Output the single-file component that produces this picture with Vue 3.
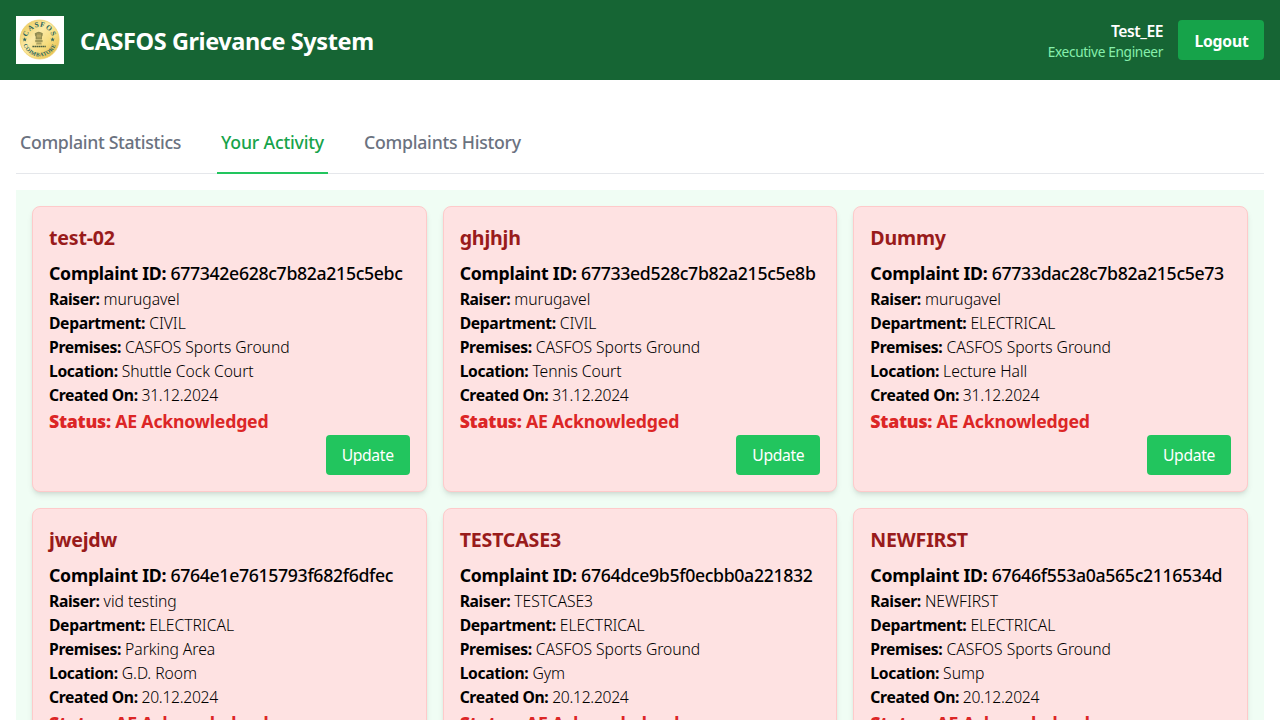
<script setup>
const tabs = ['Complaint Statistics', 'Your Activity', 'Complaints History']
const activeTab = 'Your Activity'

const complaint = (title, id, raiser, department, premises, location, created) => ({
  title,
  id,
  fields: [
    ['Raiser:', raiser],
    ['Department:', department],
    ['Premises:', premises],
    ['Location:', location],
  ],
  created,
  status: 'AE Acknowledged',
})

const complaints = [
  complaint('test-02', '677342e628c7b82a215c5ebc', 'murugavel', 'CIVIL', 'CASFOS Sports Ground', 'Shuttle Cock Court', '31.12.2024'),
  complaint('ghjhjh', '67733ed528c7b82a215c5e8b', 'murugavel', 'CIVIL', 'CASFOS Sports Ground', 'Tennis Court', '31.12.2024'),
  complaint('Dummy', '67733dac28c7b82a215c5e73', 'murugavel', 'ELECTRICAL', 'CASFOS Sports Ground', 'Lecture Hall', '31.12.2024'),
  complaint('jwejdw', '6764e1e7615793f682f6dfec', 'vid testing', 'ELECTRICAL', 'Parking Area', 'G.D. Room', '20.12.2024'),
  complaint('TESTCASE3', '6764dce9b5f0ecbb0a221832', 'TESTCASE3', 'ELECTRICAL', 'CASFOS Sports Ground', 'Gym', '20.12.2024'),
  complaint('NEWFIRST', '67646f553a0a565c2116534d', 'NEWFIRST', 'ELECTRICAL', 'CASFOS Sports Ground', 'Sump', '20.12.2024'),
]
</script>

<template>
  <div class="page">
    <header class="header">
      <div class="brand">
        <svg class="logo" viewBox="0 0 48 48" aria-label="CASFOS Coimbatore">
          <defs>
            <linearGradient id="gold" x1="0" y1="0" x2="1" y2="1">
              <stop offset="0" stop-color="#e8c34a" />
              <stop offset="0.4" stop-color="#fbeaa6" />
              <stop offset="0.65" stop-color="#f6dc7c" />
              <stop offset="1" stop-color="#dfb03c" />
            </linearGradient>
            <path id="arc-top" d="M11 23.5a12.6 12.6 0 0 1 25.2 0" />
            <path id="arc-bottom" d="M6.6 23.5a17 17 0 0 0 34 0" />
          </defs>
          <rect width="48" height="48" fill="#fff" />
          <circle cx="23.6" cy="23.5" r="19.5" fill="url(#gold)" stroke="#edcf6c" stroke-width="0.8" />
          <text class="seal seal-top" text-anchor="middle">
            <textPath href="#arc-top" startOffset="50%">CASFOS</textPath>
          </text>
          <text class="seal seal-bottom" text-anchor="middle">
            <textPath href="#arc-bottom" startOffset="50%">COIMBATORE</textPath>
          </text>
          <g fill="#2f6660">
            <path d="M8.7 21.2l.6 1.5 1.6.1-1.2 1 .4 1.6-1.4-.9-1.4.9.4-1.6-1.2-1 1.6-.1z" />
            <path d="M36.6 21.2l.6 1.5 1.6.1-1.2 1 .4 1.6-1.4-.9-1.4.9.4-1.6-1.2-1 1.6-.1z" />
          </g>
          <g fill="#7d7a43">
            <path d="M20.4 16.6q2.4-1.8 4.8 0l1.6.6-.2 2.2-.7 1.4.1 2.8h-6.4l.1-2.8-.7-1.4-.2-2.2z" opacity=".85" />
            <rect x="19.2" y="24" width="7.4" height="2.2" opacity=".7" />
            <path d="M20.6 26.5h4.6l.6 2h-5.8z" opacity=".6" />
          </g>
          <path d="M22 17.5v5M24 17.5v5M20.5 20h4.8" stroke="#e9cf78" stroke-width=".5" />
          <path d="M16.4 30.5h13.4" stroke="#4c6040" stroke-width="1.4" stroke-dasharray="1.6 .4" />
        </svg>
        <h1 class="brand-name">CASFOS Grievance System</h1>
      </div>
      <div class="account">
        <div class="user">
          <p class="user-name">Test_EE</p>
          <p class="user-role">Executive Engineer</p>
        </div>
        <button class="logout">Logout</button>
      </div>
    </header>

    <main class="main">
      <nav class="tabs">
        <button v-for="tab in tabs" :key="tab" class="tab" :class="{ active: tab === activeTab }">{{ tab }}</button>
      </nav>
      <section class="panel">
        <article v-for="c in complaints" :key="c.id" class="card">
          <h2 class="card-title">{{ c.title }}</h2>
          <p class="card-id"><strong>Complaint ID:</strong> {{ c.id }}</p>
          <p v-for="[label, value] in c.fields" :key="label" class="field"><strong>{{ label }}</strong> {{ value }}</p>
          <p class="field date"><strong>Created On:</strong> {{ c.created }}</p>
          <p class="status"><strong>Status:</strong> {{ c.status }}</p>
          <div class="actions"><button class="update">Update</button></div>
        </article>
      </section>
    </main>
  </div>
</template>

<style>
body { margin: 0; background: #fff; }
</style>

<style scoped>
.page {
  height: 720px;
  overflow: hidden;
  font-family: "Noto Sans", "Open Sans", sans-serif;
  font-size: 15.7px;
  line-height: 24px;
  color: #000;
}
h1, h2, p { margin: 0; }
button { border: 0; margin: 0; font: inherit; background: none; white-space: nowrap; }

.header {
  box-sizing: border-box;
  height: 80px;
  padding: 16px;
  display: flex;
  align-items: center;
  justify-content: space-between;
  background: #166534;
  color: #fff;
}
.brand { display: flex; align-items: center; gap: 16px; }
.account { display: flex; align-items: center; gap: 15px; }
.logo { width: 48px; height: 48px; display: block; }
.seal { font-family: "Liberation Serif", serif; font-weight: 700; fill: #28655f; }
.seal-top { font-size: 7.4px; letter-spacing: 0.9px; }
.seal-bottom { font-size: 5.6px; letter-spacing: 0.35px; }
.brand-name { padding-top: 2px; font-size: 23.5px; line-height: 32px; font-weight: 700; letter-spacing: -0.42px; }
.user { text-align: right; }
.user-name { padding-top: 1px; line-height: 24px; margin-bottom: -1px; font-weight: 600; letter-spacing: -0.45px; }
.user-role { font-size: 13.7px; line-height: 20px; letter-spacing: -0.35px; color: #86efac; }
.logout {
  width: 86px;
  height: 40px;
  padding: 1px 0 0 1px;
  border-radius: 4px;
  background: #16a34a;
  color: #fff;
  font-weight: 700;
  letter-spacing: -0.2px;
}

.main { padding: 32px 16px 0; }
.tabs { display: flex; gap: 32px; height: 61px; border-bottom: 1px solid #e5e7eb; }
.tab {
  height: 62px;
  padding: 16px 4px;
  border-bottom: 2px solid transparent;
  font-size: 17.7px;
  line-height: 28px;
  font-weight: 500;
  letter-spacing: -0.2px;
  color: #6b7280;
}
.tab:first-child { letter-spacing: -0.32px; }
.tab:last-child { letter-spacing: -0.25px; }
.tab.active { color: #16a34a; border-bottom-color: #22c55e; }

.panel {
  margin-top: 16px;
  padding: 16px;
  display: grid;
  grid-template-columns: repeat(3, minmax(0, 1fr));
  gap: 16px;
  background: #f0fdf4;
}
.card {
  padding: 16px;
  border: 1px solid #fecaca;
  border-radius: 8px;
  background: #fee2e2;
  box-shadow: 0 4px 6px -1px rgba(0, 0, 0, 0.1), 0 2px 4px -2px rgba(0, 0, 0, 0.1);
  white-space: nowrap;
}
.card-title {
  padding-top: 1px;
  margin-bottom: 7px;
  font-size: 19.6px;
  line-height: 28px;
  font-weight: 700;
  letter-spacing: -0.2px;
  color: #991b1b;
}
.card-id { font-size: 17.7px; line-height: 28px; font-weight: 500; letter-spacing: -0.34px; }
.card-id strong { font-weight: 700; letter-spacing: -0.26px; }
.field { font-weight: 300; letter-spacing: -0.04px; }
.date { letter-spacing: -0.3px; }
.field strong { font-weight: 700; letter-spacing: -0.36px; }
.status { font-size: 17.7px; line-height: 28px; font-weight: 700; letter-spacing: -0.21px; color: #dc2626; }
.status strong { font-weight: 900; letter-spacing: -0.25px; }
.actions { display: flex; justify-content: flex-end; }
.update {
  width: 84px;
  height: 40px;
  padding: 0;
  border-radius: 4px;
  background: #22c55e;
  color: #fff;
  letter-spacing: -0.35px;
}
</style>
